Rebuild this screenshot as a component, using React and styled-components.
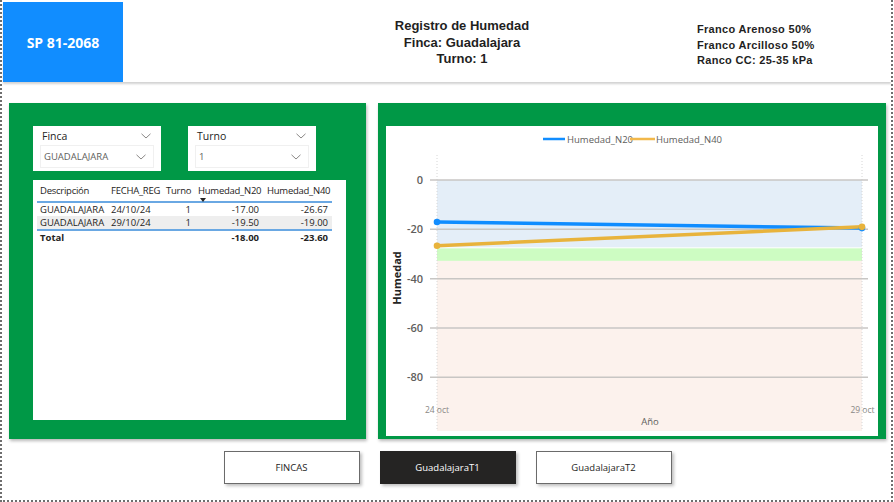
import React from 'react';
import styled, { createGlobalStyle } from 'styled-components';

const GlobalStyle = createGlobalStyle`
  html, body {
    margin: 0;
    padding: 0;
    background: #fff;
  }
  body {
    font-family: "Open Sans", "Liberation Sans", sans-serif;
    color: #252423;
  }
`;

const green = '#009846';
const uiFont = '"Open Sans", "Liberation Sans", sans-serif';

const Frame = styled.div`
  box-sizing: border-box;
  width: 893px;
  height: 502px;
  border: 2px dotted #6e6e6e;
  border-top: none;
  display: flex;
  flex-direction: column;
  overflow: hidden;
`;

const Header = styled.div`
  display: flex;
  height: 80px;
  margin: 2px 0 0 1px;
  background: #fff;
  box-shadow: 0 2px 2px rgba(0, 0, 0, 0.18);
`;

const Badge = styled.div`
  width: 120px;
  background: #118dff;
  color: #fff;
  display: flex;
  align-items: center;
  justify-content: center;
  font-family: ${uiFont};
  font-weight: 700;
  font-size: 14px;
  padding-top: 1px;
`;

const Title = styled.div`
  width: 288px;
  margin-left: 195px;
  padding-top: 16px;
  text-align: center;
  font-family: "Liberation Sans", Arial, sans-serif;
  font-weight: 700;
  font-size: 13px;
  line-height: 16.5px;
  color: #1f1f1f;
`;

const SoilInfo = styled.div`
  padding: 20px 0 0 91px;
  font-family: "Liberation Sans", Arial, sans-serif;
  font-weight: 700;
  font-size: 11px;
  line-height: 15.5px;
  letter-spacing: 0.3px;
  color: #1f1f1f;
`;

const Main = styled.div`
  display: flex;
  gap: 12px;
  margin-top: 21px;
  padding-left: 7px;
`;

const Panel = styled.div`
  box-sizing: border-box;
  width: ${p => p.$width}px;
  height: 336px;
  background: ${green};
  box-shadow: 1px 2px 3px rgba(0, 0, 0, 0.28);
  display: flex;
  flex-direction: column;
  padding: ${p => p.$padding};
`;

const SlicerRow = styled.div`
  display: flex;
  gap: 27px;
`;

const Slicer = styled.div`
  box-sizing: border-box;
  width: 128px;
  height: 45px;
  background: #fff;
  padding: 0 7px;
  display: flex;
  flex-direction: column;
`;

const SlicerHead = styled.div`
  height: 19px;
  display: flex;
  align-items: center;
  justify-content: space-between;
  padding: 0 3px 0 2px;
  font-family: ${uiFont};
  font-size: 10.5px;
  color: #252423;
`;

const SlicerField = styled.div`
  box-sizing: border-box;
  height: 23px;
  border: 1px solid #f0f0f0;
  display: flex;
  align-items: center;
  justify-content: space-between;
  padding: 0 7px 0 3px;
  font-family: ${uiFont};
  font-size: 9.5px;
  color: #605e5c;
`;

const Chevron = ({ color = '#8a8886' }) => (
  <svg width="10" height="6" viewBox="0 0 10 6">
    <polyline points="0.5,0.8 5,5 9.5,0.8" fill="none" stroke={color} strokeWidth="1" />
  </svg>
);

const TableBox = styled.div`
  flex: 1;
  margin-top: 9px;
  background: #fff;
  padding: 2px 0 0 4px;
`;

const Grid = styled.table`
  border-collapse: collapse;
  table-layout: fixed;
  width: 295px;
  font-family: ${uiFont};
  font-size: 9.5px;
  color: #252423;
`;

const HeadCell = styled.th`
  font-weight: 400;
  text-align: left;
  vertical-align: top;
  padding: 2px 0 0 ${p => p.$pad || 3}px;
  height: 17px;
  white-space: nowrap;
  letter-spacing: -0.25px;
  border-bottom: 2px solid #6aa8e3;
  position: relative;
`;

const SortMark = styled.span`
  position: absolute;
  left: 5px;
  top: 16px;
  width: 0;
  height: 0;
  border-left: 3px solid transparent;
  border-right: 3px solid transparent;
  border-top: 4px solid #252423;
`;

const Row = styled.tr`
  background: ${p => (p.$shaded ? '#eeeeee' : 'transparent')};
  border-bottom: ${p => (p.$last ? '2px solid #6aa8e3' : 'none')};
`;

const Cell = styled.td`
  height: 13px;
  padding: 0 ${p => (p.$right ? 4 : 0)}px 0 ${p => (p.$right ? 0 : 3)}px;
  text-align: ${p => (p.$right ? 'right' : 'left')};
  white-space: nowrap;
  line-height: 13px;
`;

const TotalRow = styled.tr`
  font-weight: 700;
`;

const ChartBox = styled.div`
  flex: 1;
  background: #fff;
`;

const Buttons = styled.div`
  display: flex;
  justify-content: center;
  gap: 20px;
  margin-top: 12px;
  padding-left: 2px;
`;

const NavButton = styled.div`
  box-sizing: border-box;
  width: 136px;
  height: 33px;
  display: flex;
  align-items: center;
  justify-content: center;
  border: 1px solid ${p => (p.$active ? '#252423' : '#6b6b6b')};
  background: ${p => (p.$active ? '#252423' : '#fff')};
  color: ${p => (p.$active ? '#fff' : '#252423')};
  box-shadow: 2px 2px 3px rgba(0, 0, 0, 0.25);
  font-family: ${uiFont};
  font-size: 9.5px;
`;

const rows = [
  { d: 'GUADALAJARA', f: '24/10/24', t: '1', n20: '-17.00', n40: '-26.67' },
  { d: 'GUADALAJARA', f: '29/10/24', t: '1', n20: '-19.50', n40: '-19.00' },
];

// chart scale: value -> y inside the chart box
const X0 = 51;
const X1 = 476;
const Y0 = 54;
const S = 2.4665;
const yOf = v => Y0 - v * S;

const n20 = [-17, -19.5];
const n40 = [-26.67, -19];

const HumidityChart = () => {
  const ticks = [0, -20, -40, -60, -80];
  const lab = { fontFamily: uiFont };
  return (
    <svg width="492" height="305" viewBox="0 0 492 305">
      {/* bands */}
      <rect x={X0} y={Y0} width={X1 - X0} height={yOf(-27.5) - Y0} fill="#e4eef8" />
      <rect x={X0} y={yOf(-27.5)} width={X1 - X0} height={yOf(-32.8) - yOf(-27.5)} fill="#cdfcc2" />
      <rect x={X0} y={yOf(-32.8)} width={X1 - X0} height={305 - yOf(-32.8)} fill="#fcf2ed" />
      <line x1={X0} y1={yOf(-27.5)} x2={X1} y2={yOf(-27.5)} stroke="#fff" strokeWidth="1" />

      {/* vertical dotted gridlines */}
      {[X0, X1].map(x => (
        <line key={x} x1={x} y1="29" x2={x} y2="305" stroke="#d6d6d6" strokeWidth="1" strokeDasharray="1 2" />
      ))}

      {ticks.map(t => (
        <g key={t}>
          <line x1="44" y1={yOf(t)} x2="482" y2={yOf(t)} stroke="#c8c6c4" strokeWidth="1.5" />
          <text x="37" y={yOf(t) + 4} textAnchor="end" fontSize="11" fontWeight="600" fill="#605e5c" style={lab}>
            {t}
          </text>
        </g>
      ))}

      {/* legend */}
      <line x1="157" y1="13" x2="179" y2="13" stroke="#118dff" strokeWidth="2.5" />
      <text x="181" y="17" fontSize="9.5" fill="#605e5c" style={lab}>Humedad_N20</text>
      <line x1="244" y1="13" x2="269" y2="13" stroke="#f2b84b" strokeWidth="2.5" />
      <text x="270" y="17" fontSize="9.5" fill="#605e5c" style={lab}>Humedad_N40</text>

      {/* series */}
      <line x1={X0} y1={yOf(n20[0])} x2={X1} y2={yOf(n20[1])} stroke="#118dff" strokeWidth="3.5" strokeLinecap="round" />
      <line x1={X0} y1={yOf(n40[0])} x2={X1} y2={yOf(n40[1])} stroke="#e8b33c" strokeWidth="3.5" strokeLinecap="round" />
      <circle cx={X0} cy={yOf(n20[0])} r="3.3" fill="#118dff" />
      <circle cx={X1} cy={yOf(n20[1])} r="3.3" fill="#118dff" />
      <circle cx={X0} cy={yOf(n40[0])} r="3.3" fill="#e8b33c" />
      <circle cx={X1} cy={yOf(n40[1])} r="3.3" fill="#e8b33c" />

      {/* axis labels */}
      <text x={X0} y="287" textAnchor="middle" fontSize="8.5" fill="#8a8886" style={lab}>24 oct</text>
      <text x={X1 + 0.5} y="287" textAnchor="middle" fontSize="8.5" fill="#8a8886" style={lab}>29 oct</text>
      <text x="264" y="299" textAnchor="middle" fontSize="9.5" fill="#605e5c" style={lab}>Año</text>
      <text
        x="0"
        y="0"
        transform="translate(15 152) rotate(-90)"
        textAnchor="middle"
        fontSize="11"
        fontWeight="700"
        fill="#252423"
        style={lab}
      >
        Humedad
      </text>
    </svg>
  );
};

export default function App() {
  return (
    <>
      <GlobalStyle />
      <Frame>
        <Header>
          <Badge>SP 81-2068</Badge>
          <Title>
            <div>Registro de Humedad</div>
            <div>Finca: Guadalajara</div>
            <div>Turno: 1</div>
          </Title>
          <SoilInfo>
            <div>Franco Arenoso 50%</div>
            <div>Franco Arcilloso 50%</div>
            <div>Ranco CC: 25-35 kPa</div>
          </SoilInfo>
        </Header>

        <Main>
          <Panel $width={357} $padding="23px 20px 19px 24px">
            <SlicerRow>
              <Slicer>
                <SlicerHead>
                  <span>Finca</span>
                  <Chevron />
                </SlicerHead>
                <SlicerField>
                  <span>GUADALAJARA</span>
                  <Chevron />
                </SlicerField>
              </Slicer>
              <Slicer>
                <SlicerHead>
                  <span>Turno</span>
                  <Chevron />
                </SlicerHead>
                <SlicerField>
                  <span>1</span>
                  <Chevron />
                </SlicerField>
              </Slicer>
            </SlicerRow>
            <TableBox>
              <Grid>
                <colgroup>
                  <col style={{ width: 71 }} />
                  <col style={{ width: 55 }} />
                  <col style={{ width: 32 }} />
                  <col style={{ width: 68 }} />
                  <col style={{ width: 69 }} />
                </colgroup>
                <thead>
                  <tr>
                    <HeadCell>Descripción</HeadCell>
                    <HeadCell>FECHA_REG</HeadCell>
                    <HeadCell>Turno</HeadCell>
                    <HeadCell>
                      Humedad_N20
                      <SortMark />
                    </HeadCell>
                    <HeadCell $pad={4}>Humedad_N40</HeadCell>
                  </tr>
                </thead>
                <tbody>
                  {rows.map((r, i) => (
                    <Row key={r.f} $shaded={i === 1} $last={i === rows.length - 1}>
                      <Cell>{r.d}</Cell>
                      <Cell>{r.f}</Cell>
                      <Cell $right>{r.t}</Cell>
                      <Cell $right>{r.n20}</Cell>
                      <Cell $right>{r.n40}</Cell>
                    </Row>
                  ))}
                  <TotalRow>
                    <Cell>Total</Cell>
                    <Cell />
                    <Cell />
                    <Cell $right>-18.00</Cell>
                    <Cell $right>-23.60</Cell>
                  </TotalRow>
                </tbody>
              </Grid>
            </TableBox>
          </Panel>

          <Panel $width={508} $padding="23px 8px 8px 8px">
            <ChartBox>
              <HumidityChart />
            </ChartBox>
          </Panel>
        </Main>

        <Buttons>
          <NavButton>FINCAS</NavButton>
          <NavButton $active>GuadalajaraT1</NavButton>
          <NavButton>GuadalajaraT2</NavButton>
        </Buttons>
      </Frame>
    </>
  );
}
